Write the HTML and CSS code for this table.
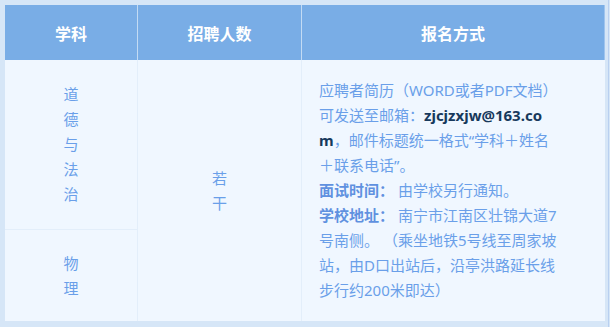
FILE: index.html
```html
<!DOCTYPE html>
<html lang="zh-CN">
<head>
<meta charset="utf-8">
<title>招聘信息</title>
<link rel="stylesheet" href="styles.css">
</head>
<body>
<div class="page">
  <table class="recruit">
    <thead>
      <tr>
        <th class="col-subject">学科</th>
        <th class="col-count">招聘人数</th>
        <th class="col-apply">报名方式</th>
      </tr>
    </thead>
    <tbody>
      <tr class="row-first">
        <td class="subject"><div class="vtext">道德与法治</div></td>
        <td class="count" rowspan="2"><div class="vtext">若干</div></td>
        <td class="apply" rowspan="2">
          <p>应聘者简历（WORD或者PDF文档）<br>可发送至邮箱：<b class="email">zjcjzxjw@163.co<br>m</b>，邮件标题统一格式“学科＋姓名<br>＋联系电话”。</p>
          <p><b>面试时间：</b> 由学校另行通知。</p>
          <p><b>学校地址：</b> 南宁市江南区壮锦大道7<br>号南侧。 （乘坐地铁5号线至周家坡<br>站，由D口出站后，沿亭洪路延长线<br>步行约200米即达）</p>
        </td>
      </tr>
      <tr class="row-second">
        <td class="subject"><div class="vtext">物理</div></td>
      </tr>
    </tbody>
  </table>
</div>
</body>
</html>
```

FILE: styles.css
```css
html, body {
  margin: 0;
  padding: 0;
}

body {
  background: #d6e6f7;
  font-family: "Noto Sans", "Noto Sans CJK SC", sans-serif;
}

.page {
  width: 609px;
  height: 327px;
  box-sizing: border-box;
  padding: 5px 0 0 5px;
  border-right: 1px solid #b9d0f0;
}

.recruit {
  width: 597px;
  border-collapse: collapse;
  table-layout: fixed;
}

.recruit th {
  height: 55px;
  padding: 0;
  background: #79ade6;
  color: #ffffff;
  font-size: 16px;
  font-weight: bold;
  text-align: center;
  vertical-align: middle;
  border-right: 1px solid #c3dbf4;
}

.recruit th:last-child {
  border-right: 1px solid #9fc4ee;
}

.col-subject { width: 132px; }
.col-count { width: 163px; }
.col-apply { width: 302px; }

.recruit td {
  background: #f0f7ff;
  color: #6a9fe9;
  font-size: 15px;
  line-height: 25px;
  padding: 0;
  vertical-align: middle;
  border-right: 1px solid #e3eefa;
}

.recruit td.apply {
  border-right: none;
}

.row-first td.subject {
  height: 169px;
  border-bottom: 1px solid #e3eefa;
}

.row-second td.subject {
  height: 91px;
}

.vtext {
  width: 15px;
  margin: 0 auto;
  text-align: center;
}

.apply {
  padding: 0 4px 0 17px !important;
  white-space: nowrap;
}

.apply p {
  margin: 0;
}

.apply b {
  font-weight: bold;
  color: #5f91e0;
}

.apply b.email {
  color: #17395c;
}
```
